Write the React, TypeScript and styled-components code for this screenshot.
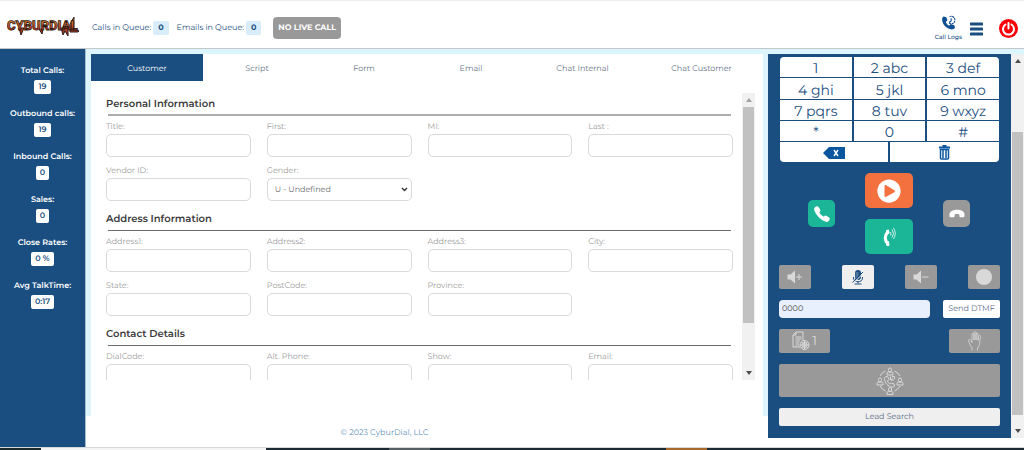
import React from 'react';
import styled, { createGlobalStyle } from 'styled-components';
import { FaPlayCircle } from 'react-icons/fa';
import { IoCall } from 'react-icons/io5';

const navy = '#1b4e80';
const sky = '#dcf5fd';
const grey = '#999999';

const GlobalStyle = createGlobalStyle`
  *, *::before, *::after { box-sizing: border-box; }
  body {
    margin: 0;
    background: #fff;
    color: ${navy};
    font-family: Montserrat, Inter, "Liberation Sans", sans-serif;
    font-size: 8px;
    line-height: 12px;
    text-rendering: geometricPrecision;
  }
  button, input, select { font: inherit; color: inherit; margin: 0; text-rendering: inherit; }
  button { border: 0; padding: 0; cursor: pointer; }
  svg { display: block; }
`;

const Page = styled.div`
  display: flex;
  flex-direction: column;
  min-height: 100vh;
`;

const Header = styled.header`
  display: flex;
  align-items: center;
  height: 49px;
  padding: 6px 6px 0 7px;
  border-top: 1px solid #ececec;
  border-bottom: 1px solid #c4c8cb;
`;

const Queues = styled.div`
  display: flex;
  gap: 8px;
  margin: 0 12px;
`;

const QueueCount = styled.div`
  display: flex;
  align-items: center;
  gap: 2px;
`;

const QueueBadge = styled.span`
  padding: 1px 5px;
  border-radius: 2px;
  background: #d8ecf9;
  font-weight: 700;
`;

const CallStatus = styled.button`
  height: 22px;
  padding: 0 5px;
  border-radius: 4px;
  background: ${grey};
  color: #fff;
  font-weight: 700;
`;

const HeaderTools = styled.div`
  display: flex;
  align-items: center;
  gap: 8px;
  margin: 2px 0 0 auto;
`;

const CallLogs = styled.a`
  display: flex;
  flex-direction: column;
  align-items: center;
  gap: 1px;
  color: ${navy};
  font-size: 6px;
  font-weight: 500;
  text-decoration: none;
`;

const IconButton = styled.button<{ $after?: number }>`
  margin-right: ${(p) => p.$after ?? 0}px;
  background: none;
`;

const Workspace = styled.div`
  display: flex;
  flex: 1;
`;

const Sidebar = styled.aside`
  display: flex;
  flex-direction: column;
  gap: 16px;
  flex: 0 0 86px;
  padding-top: 17px;
  border-right: 1px solid #a9bfd0;
  background: ${navy};
  color: #fff;
  font-weight: 600;
`;

const Stat = styled.div`
  display: flex;
  flex-direction: column;
  align-items: center;
  gap: 4px;
  height: 27px;
  line-height: 10px;
`;

const StatValue = styled.span`
  padding: 2px 4px;
  border-radius: 2px;
  background: #fff;
  color: ${navy};
`;

const Center = styled.div`
  display: flex;
  flex-direction: column;
  flex: 1;
  min-width: 0;
`;

const Stage = styled.main`
  display: flex;
  flex: 1;
  padding: 5px 5px 0;
  background: ${sky};
`;

const Panel = styled.section`
  display: flex;
  flex-direction: column;
  flex: 1;
  padding-bottom: 36px;
  background: #fff;
`;

const Tabs = styled.nav`
  display: grid;
  grid-template-columns: 112fr 108fr 106fr 108fr 115fr 123fr;
  height: 27px;
`;

const Tab = styled.button<{ $active?: boolean }>`
  padding-top: 2px;
  background: ${(p) => (p.$active ? navy : '#fff')};
  color: ${(p) => (p.$active ? '#fff' : '#66738a')};
`;

const FormArea = styled.div`
  display: flex;
  flex: 1 1 0;
  min-height: 0;
  gap: 9px;
  margin: 12px 8px 0 15px;
  overflow: hidden;
`;

const Form = styled.form`
  display: flex;
  flex-direction: column;
  gap: 8px;
  flex: 1;
  height: 0;
  padding-top: 1px;
`;

const Legend = styled.h2`
  margin: 0;
  color: #3a3a3a;
  font-size: 10px;
  font-weight: 600;
  line-height: 20px;
`;

const Rule = styled.hr<{ $light?: boolean }>`
  height: ${(p) => (p.$light ? 2 : 1)}px;
  margin: ${(p) => (p.$light ? 0 : 1)}px 2px 4px;
  border: 0;
  background: ${(p) => (p.$light ? '#adadad' : '#6b6b6b')};
`;

const Fields = styled.div`
  display: grid;
  grid-template-columns: repeat(4, 1fr);
  gap: 7px 16px;
`;

const Field = styled.div`
  display: flex;
  flex-direction: column;
  position: relative;
  color: #9c9c9c;
  line-height: 14px;
`;

const TextBox = styled.input`
  width: 100%;
  height: 23px;
  padding: 0 8px;
  border: 1px solid #d9d9d9;
  border-radius: 5px;
  background: #fff;
`;

const Select = styled.select`
  width: 100%;
  height: 23px;
  padding: 1px 7px 0;
  border: 1px solid #d9d9d9;
  border-radius: 5px;
  background: #fff;
  color: #6c6c6c;
  appearance: none;
`;

const Chevron = styled.svg`
  position: absolute;
  right: 4px;
  bottom: 9px;
  pointer-events: none;
`;

const Track = styled.div`
  display: flex;
  flex-direction: column;
  flex: 0 0 13px;
  align-items: center;
  background: #f1f1f1;
`;

const Arrow = styled.div<{ $down?: boolean; $dim?: boolean }>`
  display: flex;
  align-items: center;
  justify-content: center;
  height: 14px;
  color: ${(p) => (p.$dim ? '#a3a3a3' : '#4d4d4d')};
  transform: ${(p) => (p.$down ? 'rotate(180deg)' : 'none')};
`;

const Rail = styled.div<{ $before: number; $thumb: number; $after: number }>`
  display: grid;
  flex: 1;
  width: 11px;
  grid-template-rows: ${(p) => `${p.$before}fr ${p.$thumb}fr ${p.$after}fr`};
`;

const Thumb = styled.div`
  grid-row: 2;
  background: #c1c1c1;
`;

const Footer = styled.footer`
  display: flex;
  align-items: center;
  justify-content: center;
  height: 31px;
  padding: 2px 85px 0 0;
  color: #5f92bb;
`;

const DialColumn = styled.div`
  display: flex;
  flex: 0 0 256px;
  margin-bottom: 9px;
  border-top: 5px solid ${sky};
`;

const Dialer = styled.aside`
  display: flex;
  flex-direction: column;
  gap: 11px;
  flex: 1;
  padding: 3px 11px 12px;
  background: ${navy};
`;

const Keypad = styled.div`
  display: grid;
  grid-template-columns: repeat(6, 1fr);
  grid-template-rows: 20px 21px 20px 20px 20px;
  gap: 1px 2px;
  padding: 0 1px;
`;

const Key = styled.button<{ $span: number; $corner?: string }>`
  display: flex;
  align-items: center;
  justify-content: center;
  grid-column: span ${(p) => p.$span};
  padding-top: ${(p) => (p.$span === 2 ? 2 : 0)}px;
  border-radius: ${(p) => p.$corner ?? '0'};
  background: #fff;
  font-size: 14px;
  line-height: 18px;
`;

const CallRow = styled.div`
  display: flex;
  align-items: center;
  justify-content: space-between;
  padding: 0 30px 0 29px;
`;

const CallStack = styled.div`
  display: flex;
  flex-direction: column;
  gap: 11px;
`;

const CallButton = styled.button<{ $tone: string; $large?: boolean }>`
  display: flex;
  align-items: center;
  justify-content: center;
  width: ${(p) => (p.$large ? 48 : 27)}px;
  height: ${(p) => (p.$large ? 35 : 27)}px;
  border-radius: 5px;
  background: ${(p) => p.$tone};
  color: #fff;
`;

const ToolRow = styled.div`
  display: flex;
  justify-content: space-between;
`;

const Tool = styled.button<{ $width?: string; $height?: number; $light?: boolean }>`
  display: flex;
  align-items: center;
  justify-content: center;
  gap: 2px;
  width: ${(p) => p.$width ?? '32px'};
  height: ${(p) => p.$height ?? 24}px;
  border-radius: 2px;
  background: ${(p) => (p.$light ? '#efefef' : grey)};
  color: ${(p) => (p.$light ? navy : '#d9d9d9')};
`;

const WaitCount = styled.span`
  font-size: 13px;
`;

const DtmfBox = styled.input`
  width: 151px;
  height: 18px;
  padding: 0 3px;
  border: 0;
  border-radius: 4px;
  background: #e8f0fe;
  color: #444;
`;

const TextButton = styled.button<{ $wide?: boolean }>`
  width: ${(p) => (p.$wide ? '100%' : '57px')};
  height: 18px;
  border-radius: 2px;
  background: ${(p) => (p.$wide ? '#efefef' : '#fff')};
  color: #5b6c8a;
`;

const Taskbar = styled.div`
  height: 3px;
  border-top: 1px solid #d5d8da;
  background: linear-gradient(
    90deg,
    #1c2a2e 0 4%,
    #f4f4f4 4% 26%,
    #1b2a33 26% 38%,
    #566064 38% 42%,
    #1b2a33 42% 65%,
    #a8692c 65% 69%,
    #1b2a33 69%
  );
`;

const Logo = () => (
  <svg width="73" height="22" viewBox="0 0 73 22" role="img" aria-label="CyburDial">
    <defs>
      <linearGradient id="flame" x1="0" y1="0" x2="0" y2="1">
        <stop offset="0" stopColor="#ee9a30" />
        <stop offset="0.5" stopColor="#c9502a" />
        <stop offset="1" stopColor="#94291f" />
      </linearGradient>
    </defs>
    <path
      d="M12 11l2 7 3-7zM32 12l3 5 1-5zM54 11l2 7 2-4 3 5 0-8zM63 7l4-7v12l5 2-1 1h-8z"
      fill="url(#flame)"
      stroke="#2c1a14"
      strokeWidth="1"
    />
    <text
      x="0"
      y="13"
      fontFamily="Roboto, sans-serif"
      fontSize="13"
      fontWeight="900"
      fill="url(#flame)"
      stroke="#2c1a14"
      strokeWidth="0.8"
    >
      CYBURDIAL
    </text>
  </svg>
);

const CallLogsIcon = () => (
  <svg width="15" height="15" viewBox="0 0 28 28">
    <path
      d="M5 3l5 1 2 6-3 3c1 3 3 5 6 7l3-3 7 2 1 5c-1 2-3 3-6 3C10 26 2 17 2 8c0-2 1-4 3-5z"
      fill="#0f4f93"
    />
    <path d="M16 3a7 7 0 1 1-1 12" fill="none" stroke="#0f4f93" strokeWidth="2" strokeDasharray="4 1" />
    <path d="M19 6v5l-4 3" fill="none" stroke="#0f4f93" strokeWidth="2" />
  </svg>
);

const MenuIcon = () => (
  <svg width="13" height="14" viewBox="0 0 13 14">
    <path d="M1 2h11M1 7h11M1 12h11" stroke={navy} strokeWidth="3" strokeLinecap="round" />
  </svg>
);

const PowerIcon = () => (
  <svg width="19" height="19" viewBox="0 0 38 38">
    <circle cx="19" cy="19" r="19" fill="#fb0007" />
    <path d="M13 11a11 11 0 1 0 12 0" fill="none" stroke="#fff" strokeWidth="4" strokeLinecap="round" />
    <path d="M19 8v11" stroke="#fff" strokeWidth="4" strokeLinecap="round" />
  </svg>
);

const BackspaceIcon = () => (
  <svg width="22" height="13" viewBox="0 0 22 13">
    <path d="M0 7l6-6h16v12H6z" fill="#0a57a0" />
    <path d="M11 4l4 6M15 4l-4 6" stroke="#fff" strokeWidth="1.4" />
  </svg>
);

const TrashIcon = () => (
  <svg width="11" height="15" viewBox="0 0 22 30">
    <path d="M0 3h7V0h8v3h7v4H0z" fill="#0a57a0" />
    <path d="M3 9v17q0 2 2 2h12q2 0 2-2V9z" fill="none" stroke="#0a57a0" strokeWidth="3" />
    <path d="M8 9v17M14 9v17" stroke="#0a57a0" strokeWidth="3" />
  </svg>
);

const SpeakerCallIcon = () => (
  <svg width="14" height="20" viewBox="0 0 28 40">
    <path d="M12 9Q1 22 12 34" fill="none" stroke="#fff" strokeWidth="6" />
    <path d="M8 7l4-2q2 0 2 2l1 5q0 2-2 2l-4 1zM7 28l5 0q2 0 2 2l1 6q0 2-2 2h-4z" fill="#fff" />
    <path d="M17 10q2 4 0 7M20 5q6 8 0 16M23 2q7 11 0 22" fill="none" stroke="#fff" strokeWidth="1.6" />
  </svg>
);

const VolumeIcon = ({ plus }: { plus?: boolean }) => (
  <svg width="16" height="14" viewBox="0 0 32 28">
    <path d="M1 9h6l9-8v26l-9-8H1z" fill="currentColor" />
    <path d={plus ? 'M18 14h12M24 8v12' : 'M18 14h13'} stroke="currentColor" strokeWidth="2" />
  </svg>
);

const MicOffIcon = () => (
  <svg width="12" height="15" viewBox="0 0 24 30">
    <rect x="6" y="0" width="12" height="20" rx="6" fill={navy} />
    <path d="M7 6h6M7 10h6M7 14h4" stroke="#efefef" strokeWidth="1" />
    <path d="M3 14v2c0 10 18 10 18 0v-2M12 23v4M5 28h14" fill="none" stroke={navy} strokeWidth="2" />
    <path d="M3 26L23 6" stroke="#efefef" strokeWidth="2" />
    <path d="M1 25L22 4" stroke={navy} strokeWidth="2" />
  </svg>
);

const RecordIcon = () => (
  <svg width="16" height="16" viewBox="0 0 16 16">
    <circle cx="8" cy="8" r="8" fill="currentColor" />
  </svg>
);

const QueueIcon = () => (
  <svg width="18" height="20" viewBox="0 0 36 40" fill="none" stroke="currentColor" strokeWidth="2">
    <path d="M8 2h14v17M8 2L2 8v24h14M8 2v6H2M7 12h12M7 16h12M7 20h9M7 24h7M7 28h7" />
    <circle cx="25" cy="28" r="9" />
    <circle cx="25" cy="28" r="5" />
    <path d="M16 28h18M25 19v18M19 22l12 12M31 22L19 34" />
  </svg>
);

const HandIcon = () => (
  <svg width="13" height="20" viewBox="0 0 26 40" fill="none" stroke="currentColor" strokeWidth="1.6">
    <path d="M8 39v-6C5 30 2 24 1 19c0-3 3-3 4-1l3 5V7c0-3 4-3 4 0v11V4c0-4 4-4 4 0v14V6c0-3 4-3 4 0v13l1-8c0-3 4-3 4 0l-2 14c0 4-2 7-4 9v5" />
  </svg>
);

const person = 'M-3-4a3 3 0 1 1 6 0v2a3 3 0 1 1-6 0zM-6 7V4q0-3 3-3h6q3 0 3 3v3z';

const ConferenceIcon = () => (
  <svg width="28" height="28" viewBox="0 0 56 56" fill="none" stroke="currentColor" strokeWidth="2">
    <path d="M19 8A22 22 0 0 0 8 18M37 8a22 22 0 0 1 11 10M8 38a22 22 0 0 0 11 10M48 38a22 22 0 0 1-11 10" />
    <path d={person} transform="translate(28 9)" />
    <path d={person} transform="translate(8 29)" />
    <path d={person} transform="translate(48 29)" />
    <path d={person} transform="translate(28 48)" />
    <path d="M20 19l4 1 2 5-3 3c1 3 3 5 5 6l3-2 5 2 1 4c-1 2-3 2-5 2-8-1-14-8-15-15 0-3 1-5 3-6zM29 19v7h7M29 26l4-4M32 19h5v5" />
  </svg>
);

const ArrowHead = () => (
  <svg width="6" height="4" viewBox="0 0 6 4">
    <path d="M0 4l3-4 3 4z" fill="currentColor" />
  </svg>
);

const Scrollbar = ({ before, thumb, after, dim }: { before: number; thumb: number; after: number; dim?: boolean }) => (
  <Track aria-hidden="true">
    <Arrow $dim={dim}><ArrowHead /></Arrow>
    <Rail $before={before} $thumb={thumb} $after={after}><Thumb /></Rail>
    <Arrow $down><ArrowHead /></Arrow>
  </Track>
);

const queues = [['Calls in Queue:', '0'], ['Emails in Queue:', '0']];

const stats = [
  ['Total Calls:', '19'],
  ['Outbound calls:', '19'],
  ['Inbound Calls:', '0'],
  ['Sales:', '0'],
  ['Close Rates:', '0 %'],
  ['Avg TalkTime:', '0:17'],
];

const tabs = ['Customer', 'Script', 'Form', 'Email', 'Chat Internal', 'Chat Customer'];

const sections = [
  { title: 'Personal Information', fields: ['Title:', 'First:', 'MI:', 'Last :', 'Vendor ID:', 'Gender:'] },
  { title: 'Address Information', fields: ['Address1:', 'Address2:', 'Address3:', 'City:', 'State:', 'PostCode:', 'Province:'] },
  { title: 'Contact Details', fields: ['DialCode:', 'Alt. Phone:', 'Show:', 'Email:'] },
];

const keys = ['1', '2 abc', '3 def', '4 ghi', '5 jkl', '6 mno', '7 pqrs', '8 tuv', '9 wxyz', '*', '0', '#'];
const keyCorners: Record<string, string> = { '1': '4px 0 0 0', '3 def': '0 4px 0 0' };

const fieldId = (label: string) => 'field-' + label.toLowerCase().replace(/[^a-z0-9]/g, '');

export default function App() {
  return (
    <>
      <GlobalStyle />
      <Page>
        <Header>
          <Logo />
          <Queues>
            {queues.map(([label, count]) => (
              <QueueCount key={label}>
                {label}
                <QueueBadge>{count}</QueueBadge>
              </QueueCount>
            ))}
          </Queues>
          <CallStatus>NO LIVE CALL</CallStatus>
          <HeaderTools>
            <CallLogs href="#call-logs">
              <CallLogsIcon />
              Call Logs
            </CallLogs>
            <IconButton aria-label="Menu" $after={8}><MenuIcon /></IconButton>
            <IconButton aria-label="Log out"><PowerIcon /></IconButton>
          </HeaderTools>
        </Header>

        <Workspace>
          <Sidebar>
            {stats.map(([label, value]) => (
              <Stat key={label}>
                {label}
                <StatValue>{value}</StatValue>
              </Stat>
            ))}
          </Sidebar>

          <Center>
            <Stage>
              <Panel>
                <Tabs>
                  {tabs.map((tab, i) => (
                    <Tab key={tab} $active={i === 0}>{tab}</Tab>
                  ))}
                </Tabs>
                <FormArea>
                  <Form>
                    {sections.map((section, i) => (
                      <section key={section.title}>
                        <Legend>{section.title}</Legend>
                        <Rule $light={i === 0} />
                        <Fields>
                          {section.fields.map((label) => (
                            <Field key={label}>
                              <label htmlFor={fieldId(label)}>{label}</label>
                              {label === 'Gender:' ? (
                                <>
                                  <Select id={fieldId(label)} defaultValue="U">
                                    <option value="U">U - Undefined</option>
                                    <option value="F">F - Female</option>
                                    <option value="M">M - Male</option>
                                  </Select>
                                  <Chevron width="7" height="5" viewBox="0 0 7 5">
                                    <path d="M1 1l2.5 2.5L6 1" fill="none" stroke="#333" strokeWidth="1.4" />
                                  </Chevron>
                                </>
                              ) : (
                                <TextBox id={fieldId(label)} type="text" />
                              )}
                            </Field>
                          ))}
                        </Fields>
                      </section>
                    ))}
                  </Form>
                  <Scrollbar before={0} thumb={216} after={43} dim />
                </FormArea>
              </Panel>
            </Stage>
            <Footer>© 2023 CyburDial, LLC</Footer>
          </Center>

          <DialColumn>
            <Dialer>
              <Keypad>
                {keys.map((key) => (
                  <Key key={key} $span={2} $corner={keyCorners[key]}>{key}</Key>
                ))}
                <Key $span={3} $corner="0 0 0 4px" aria-label="Backspace"><BackspaceIcon /></Key>
                <Key $span={3} $corner="0 0 4px 0" aria-label="Clear number"><TrashIcon /></Key>
              </Keypad>
              <CallRow>
                <CallButton $tone="#1bb698" aria-label="Call"><IoCall size={18} /></CallButton>
                <CallStack>
                  <CallButton $tone="#f3703f" $large aria-label="Start"><FaPlayCircle size={24} /></CallButton>
                  <CallButton $tone="#1bb698" $large aria-label="Speaker call"><SpeakerCallIcon /></CallButton>
                </CallStack>
                <CallButton $tone={grey} aria-label="Hang up">
                  <svg width="16" height="9" viewBox="0 0 34 18">
                    <path d="M1 13C0 4 9 1 17 1s17 3 16 12c0 4-2 4-4 4h-4c-3 0-3-2-3-6-3-1-7-1-10 0 0 4 0 6-3 6H5c-3 0-4-1-4-4z" fill="#fff" />
                  </svg>
                </CallButton>
              </CallRow>
              <ToolRow>
                <Tool aria-label="Volume up"><VolumeIcon plus /></Tool>
                <Tool $light aria-label="Mute"><MicOffIcon /></Tool>
                <Tool aria-label="Volume down"><VolumeIcon /></Tool>
                <Tool aria-label="Record"><RecordIcon /></Tool>
              </ToolRow>
              <ToolRow>
                <DtmfBox aria-label="DTMF digits" defaultValue="0000" />
                <TextButton>Send DTMF</TextButton>
              </ToolRow>
              <ToolRow>
                <Tool $width="51px"><QueueIcon /><WaitCount>1</WaitCount></Tool>
                <Tool $width="51px" aria-label="Hold"><HandIcon /></Tool>
              </ToolRow>
              <Tool $width="100%" $height={33} aria-label="Conference"><ConferenceIcon /></Tool>
              <TextButton $wide>Lead Search</TextButton>
            </Dialer>
            <Scrollbar before={64} thumb={283} after={9} />
          </DialColumn>
        </Workspace>
        <Taskbar />
      </Page>
    </>
  );
}
